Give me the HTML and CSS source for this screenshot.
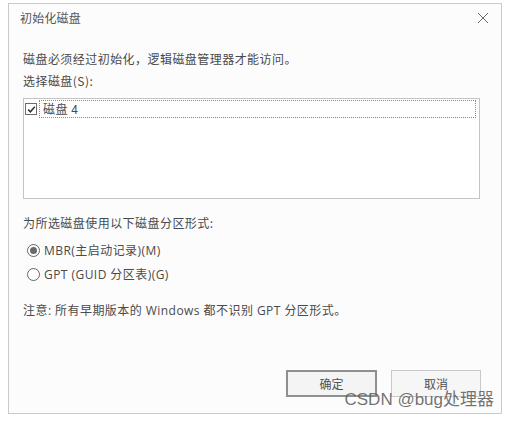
FILE: index.html
```html
<!DOCTYPE html>
<html lang="zh">
<head>
<meta charset="utf-8">
<link rel="stylesheet" href="styles.css">
</head>
<body>
<div class="dialog">
  <div class="titlebar">
    <span class="title">初始化磁盘</span>
    <svg class="close" width="12" height="12" viewBox="0 0 12 12"><path d="M1 1L11 11M11 1L1 11" stroke="#6a6a6a" stroke-width="1" fill="none"/></svg>
  </div>
  <div class="content">
    <div class="line msg">磁盘必须经过初始化，逻辑磁盘管理器才能访问。</div>
    <div class="line label">选择磁盘(S):</div>
    <div class="listbox">
      <div class="item">
        <span class="check"><svg width="9" height="9" viewBox="0 0 9 9"><path d="M1.2 4.6L3.4 6.8L7.8 1.8" stroke="#333" stroke-width="1.5" fill="none"/></svg></span>
        <span class="itemtext">磁盘 4</span>
      </div>
    </div>
    <div class="line part">为所选磁盘使用以下磁盘分区形式:</div>
    <div class="radio first"><span class="circle on"></span><span>MBR(主启动记录)(M)</span></div>
    <div class="radio"><span class="circle"></span><span>GPT (GUID 分区表)(G)</span></div>
    <div class="line note">注意: 所有早期版本的 Windows 都不识别 GPT 分区形式。</div>
    <div class="buttons">
      <div class="btn default">确定</div>
      <div class="btn">取消</div>
    </div>
  </div>
  <div class="watermark">CSDN @bug处理器</div>
</div>
</body>
</html>
```
FILE: styles.css
```css
html, body {
  margin: 0;
  padding: 0;
  background: #ffffff;
}
body {
  font-family: "Open Sans", "Noto Sans CJK SC", sans-serif;
  font-size: 12px;
  color: #4a4a4a;
}
.dialog {
  position: relative;
  margin: 3px 0 0 8px;
  width: 492px;
  height: 409px;
  border: 1px solid #cacaca;
  background: #fcfcfc;
  display: flex;
  flex-direction: column;
}
.titlebar {
  height: 28px;
  display: flex;
  align-items: center;
  justify-content: space-between;
  padding: 0 12px 0 11px;
}
.title {
  font-family: "Noto Sans CJK SC", sans-serif;
  font-size: 12px;
  color: #555;
  line-height: 16px;
  letter-spacing: 0.2px;
}
.close {
  display: block;
}
.content {
  display: flex;
  flex-direction: column;
  padding: 0 20px 0 14px;
  letter-spacing: 0.45px;
}
.line {
  line-height: 16px;
  height: 16px;
  white-space: nowrap;
  font-family: "Noto Sans CJK SC", sans-serif;
}
.note {
  font-family: "Open Sans", "Noto Sans CJK SC", sans-serif;
}
.msg { margin-top: 19px; }
.label { margin-top: 6px; }
.listbox {
  margin-top: 9px;
  width: 453px;
  height: 98px;
  border: 1px solid #c4c4c4;
  background: #ffffff;
  padding: 1px 1px 0 1px;
  box-sizing: content-box;
  letter-spacing: 0;
}
.item {
  display: flex;
  align-items: center;
  height: 18px;
}
.check {
  width: 10px;
  height: 10px;
  border: 1px solid #6d6d6d;
  background: #fff;
  display: flex;
  align-items: center;
  justify-content: center;
  margin-right: 2px;
}
.check svg { display: block; }
.itemtext {
  flex: 1;
  height: 16px;
  line-height: 16px;
  border: 1px dotted #8a8a8a;
  padding-left: 3px;
  margin-right: 2px;
  font-family: "Noto Sans CJK SC", sans-serif;
  letter-spacing: 0.5px;
}
.part { margin-top: 16px; }
.radio {
  display: flex;
  align-items: center;
  height: 18px;
  margin-top: 6px;
  padding-left: 4px;
  font-family: "Open Sans", "Noto Sans CJK SC", sans-serif;
  white-space: nowrap;
}
.radio.first { margin-top: 10px; }
.circle {
  width: 11px;
  height: 11px;
  border: 1px solid #666;
  border-radius: 50%;
  background: #fff;
  margin-right: 4px;
  display: flex;
  align-items: center;
  justify-content: center;
}
.circle.on::after {
  content: "";
  width: 7px;
  height: 7px;
  border-radius: 50%;
  background: #6a6a6a;
}
.note { margin-top: 20px; }
.buttons {
  margin-top: 51px;
  display: flex;
  justify-content: flex-end;
  gap: 14px;
  letter-spacing: 0;
}
.btn {
  width: 88px;
  height: 25px;
  border: 1px solid #c9c9c9;
  background: #f6f6f6;
  display: flex;
  align-items: center;
  justify-content: center;
  font-family: "Noto Sans CJK SC", sans-serif;
  line-height: 14px;
  color: #505050;
}
.btn.default {
  border: 2px solid #8f8f8f;
  width: 87px;
  height: 23px;
  background: #f4f4f4;
}
.watermark {
  position: absolute;
  right: 7px;
  bottom: 5px;
  font-family: "Liberation Sans", "Noto Sans CJK SC", sans-serif;
  font-size: 17px;
  line-height: 17px;
  color: rgba(90, 90, 90, 0.85);
  white-space: nowrap;
}
```
